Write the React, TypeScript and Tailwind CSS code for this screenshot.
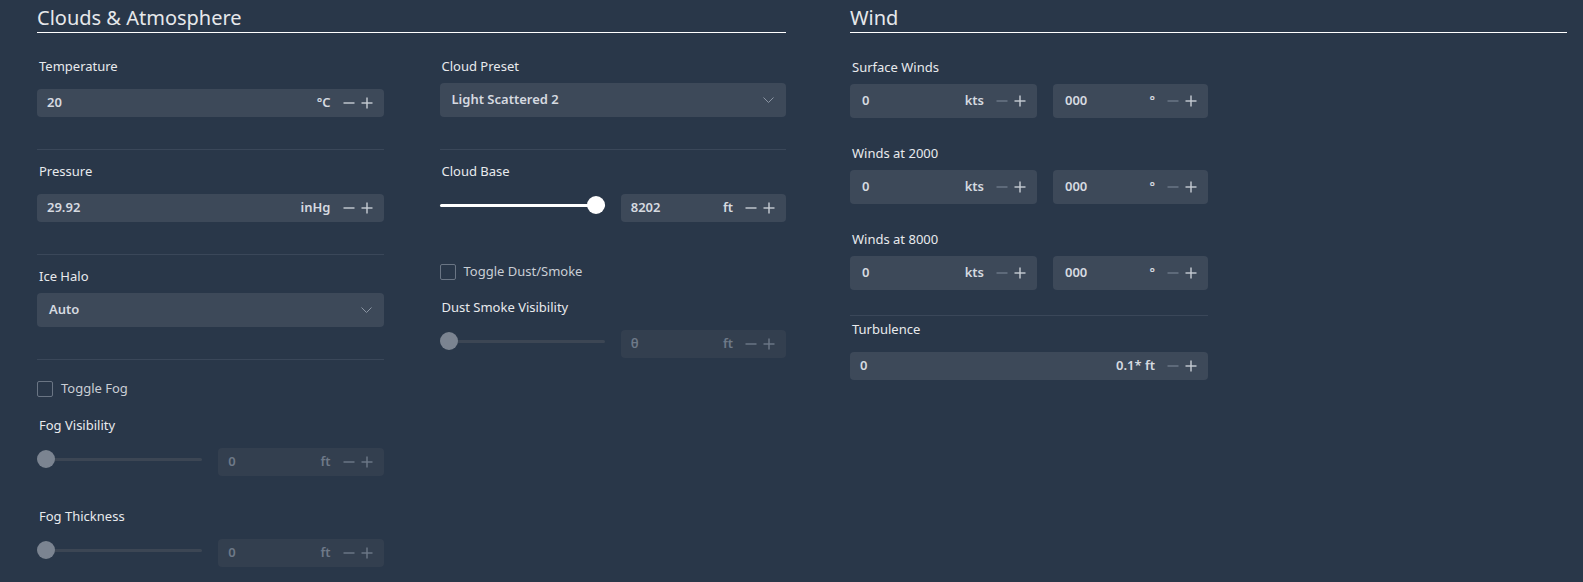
import React from 'react'

const Minus = ({ dim }: { dim?: boolean }) => (
  <svg width="12" height="12" viewBox="0 0 12 12" className={dim ? 'text-[#6e7988]' : 'text-[#c8cdd4]'}>
    <line x1="0.5" y1="6" x2="11.5" y2="6" stroke="currentColor" strokeWidth="1.4" />
  </svg>
)

const Plus = ({ dim }: { dim?: boolean }) => (
  <svg width="12" height="12" viewBox="0 0 12 12" className={dim ? 'text-[#6e7988]' : 'text-[#c8cdd4]'}>
    <line x1="0.5" y1="6" x2="11.5" y2="6" stroke="currentColor" strokeWidth="1.4" />
    <line x1="6" y1="0.5" x2="6" y2="11.5" stroke="currentColor" strokeWidth="1.4" />
  </svg>
)

const Chevron = () => (
  <svg width="11" height="6" viewBox="0 0 11 6" className="text-[#8b95a3]">
    <path d="M0.5 0.5 L5.5 5.5 L10.5 0.5" fill="none" stroke="currentColor" strokeWidth="1" />
  </svg>
)

type NumProps = {
  value: string
  unit: string
  tall?: boolean
  disabled?: boolean
  minusDim?: boolean
  className?: string
}

const NumInput = ({ value, unit, tall, disabled, minusDim, className = '' }: NumProps) => (
  <div
    className={`flex items-center rounded-[4px] pr-[11px] ${tall ? 'h-[34px] pl-[12px]' : 'h-[28px] pl-[10px]'} ${
      disabled ? 'bg-[#333f4f]' : 'bg-[#3d4959]'
    } ${className}`}
  >
    <span className={`flex-1 text-[13px] font-semibold ${disabled ? 'text-[#6e7988]' : 'text-[#d6dae0]'}`}>{value}</span>
    <span className={`mr-[12px] text-[13px] font-semibold ${disabled ? 'text-[#6e7988]' : 'text-[#d6dae0]'}`}>{unit}</span>
    <div className="flex items-center gap-[6px]">
      <Minus dim={disabled || minusDim} />
      <Plus dim={disabled} />
    </div>
  </div>
)

const Select = ({ value }: { value: string }) => (
  <div className="flex h-[34px] items-center justify-between rounded-[4px] bg-[#3d4959] pl-[12px] pr-[12px]">
    <span className="text-[13px] font-semibold text-[#d6dae0]">{value}</span>
    <Chevron />
  </div>
)

const Label = ({ children }: { children: React.ReactNode }) => (
  <div className="h-5 pl-[2px] text-[13px] leading-5 text-[#e8eaed]">{children}</div>
)

const Slider = ({ pct, disabled }: { pct: number; disabled?: boolean }) => (
  <div className="relative flex h-[34px] items-center">
    <div className="h-[3px] w-full rounded-full bg-[#3c4654]">
      <div className="h-full rounded-full bg-white" style={{ width: `${pct}%` }} />
    </div>
    <div
      className={`absolute top-1/2 h-[18px] w-[18px] -translate-y-1/2 rounded-full ${disabled ? 'bg-[#7b8491]' : 'bg-white'}`}
      style={{ left: `calc(${pct}% - ${(pct / 100) * 18}px)` }}
    />
  </div>
)

const SliderRow = ({ pct, value, disabled }: { pct: number; value: string; disabled?: boolean }) => (
  <div className="mt-[7px] grid grid-cols-2 gap-x-[16px]">
    <Slider pct={pct} disabled={disabled} />
    <div className="flex h-[34px] items-end">
      <NumInput value={value} unit="ft" disabled={disabled} className="w-full" />
    </div>
  </div>
)

const Check = ({ label }: { label: string }) => (
  <div className="flex h-5 items-center gap-[8px]">
    <div className="h-[16px] w-[16px] rounded-[2px] border border-[#6a7584]" />
    <span className="text-[13px] text-[#c9ced5]">{label}</span>
  </div>
)

const Title = ({ children }: { children: React.ReactNode }) => (
  <h2 className="border-b border-white pt-1 text-[20px] leading-7 text-[#e6e8eb]">{children}</h2>
)

const Field = ({ label, children }: { label: string; children: React.ReactNode }) => (
  <div className="border-b border-[#3a4759] pt-[11px] pb-[32px]">
    <Label>{label}</Label>
    <div className="mt-[7px] flex h-[34px] flex-col justify-end">{children}</div>
  </div>
)

const WindInputs = () => (
  <div className="mt-[7px] flex gap-[16px]">
    <NumInput value="0" unit="kts" tall minusDim className="w-[187px]" />
    <NumInput value="000" unit="°" tall minusDim className="w-[155px]" />
  </div>
)

const WindRow = ({ label }: { label: string }) => (
  <div className="pt-[1px] pb-[24px]">
    <Label>{label}</Label>
    <WindInputs />
  </div>
)

export default function App() {
  return (
    <div className="flex min-h-screen gap-[64px] bg-[#293749] pl-[37px] pr-[16px] font-['Noto_Sans',sans-serif]">
      <section className="w-[749px]">
        <Title>Clouds &amp; Atmosphere</Title>
        <div className="grid grid-cols-2 gap-x-[56px] pt-[12px]">
          <div>
            <Field label="Temperature">
              <NumInput value="20" unit="°C" />
            </Field>
            <Field label="Pressure">
              <NumInput value="29.92" unit="inHg" />
            </Field>
            <Field label="Ice Halo">
              <Select value="Auto" />
            </Field>
            <div className="mt-[19px]">
              <Check label="Toggle Fog" />
            </div>
            <div className="mt-[16px]">
              <Label>Fog Visibility</Label>
              <SliderRow pct={0} value="0" disabled />
            </div>
            <div className="mt-[30px]">
              <Label>Fog Thickness</Label>
              <SliderRow pct={0} value="0" disabled />
            </div>
          </div>
          <div>
            <Field label="Cloud Preset">
              <Select value="Light Scattered 2" />
            </Field>
            <div className="pt-[11px]">
              <Label>Cloud Base</Label>
              <SliderRow pct={100} value="8202" />
            </div>
            <div className="mt-[40px]">
              <Check label="Toggle Dust/Smoke" />
            </div>
            <div className="mt-[15px]">
              <Label>Dust Smoke Visibility</Label>
              <SliderRow pct={0} value="θ" disabled />
            </div>
          </div>
        </div>
      </section>
      <section className="flex-1">
        <Title>Wind</Title>
        <div className="w-[358px] pt-[23px]">
          <WindRow label="Surface Winds" />
          <WindRow label="Winds at 2000" />
          <div className="border-b border-[#3a4759] pt-[1px] pb-[25px]">
            <Label>Winds at 8000</Label>
            <WindInputs />
          </div>
          <div className="pt-[3px]">
            <Label>Turbulence</Label>
            <div className="mt-[7px] flex h-[34px] flex-col justify-end">
              <NumInput value="0" unit="0.1* ft" minusDim />
            </div>
          </div>
        </div>
      </section>
    </div>
  )
}
